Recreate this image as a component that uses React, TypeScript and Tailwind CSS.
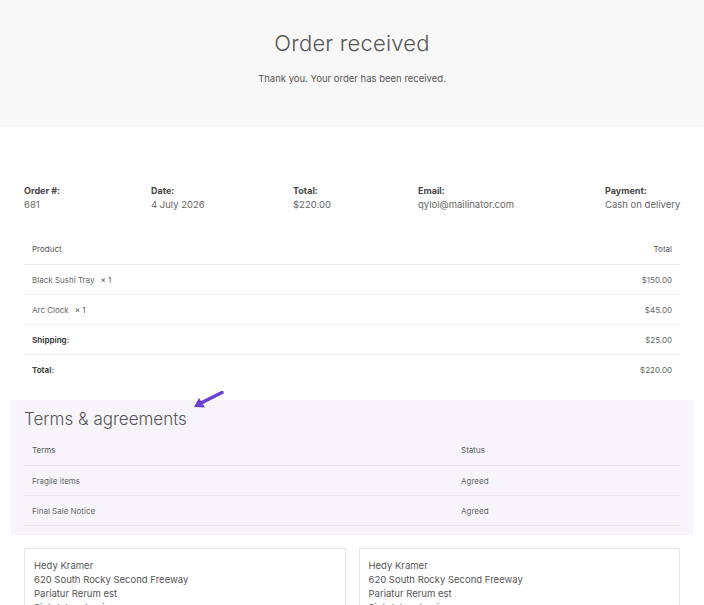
import React from "react";

const font = { fontFamily: "Inter, 'Noto Sans', sans-serif" };

export default function App() {
  const details = [
    { label: "Order #:", value: "681", w: "w-[127px]" },
    { label: "Date:", value: "4 July 2026", w: "w-[142px]" },
    { label: "Total:", value: "$220.00", w: "w-[125px]" },
    { label: "Email:", value: "qylol@mailinator.com", w: "w-[187px]" },
    { label: "Payment:", value: "Cash on delivery", w: "" },
  ];
  const rows = [
    { name: "Black Sushi Tray", qty: true, price: "$150.00" },
    { name: "Arc Clock", qty: true, price: "$45.00" },
    { name: "Shipping:", bold: true, price: "$25.00" },
    { name: "Total:", bold: true, price: "$220.00" },
  ];
  const address = ["Hedy Kramer", "620 South Rocky Second Freeway", "Pariatur Rerum est", "Sint dolor et qui"];
  return (
    <div className="w-[704px] h-[605px] overflow-hidden bg-white text-[#555]" style={font}>
      <div className="h-[127px] bg-[#f8f8f8] flex flex-col items-center pt-[28px]">
        <h1 className="text-[22px] leading-[30px] font-light text-[#555] tracking-[0.2px]">Order received</h1>
        <p className="mt-[14px] text-[9.5px] leading-[14px] text-[#555]">Thank you. Your order has been received.</p>
      </div>

      <div className="px-[24px] pt-[57px] flex">
        {details.map((d) => (
          <div key={d.label} className={`${d.w} shrink-0`}>
            <div className="text-[9px] leading-[14px] font-bold text-[#444]">{d.label}</div>
            <div className="text-[9.5px] leading-[14px] text-[#666]">{d.value}</div>
          </div>
        ))}
      </div>

      <div className="mx-[24px] mt-[21px]">
        <div className="h-[32px] flex items-center justify-between px-[8px] border-b border-[#ececec] text-[8px] text-[#555]">
          <span>Product</span>
          <span>Total</span>
        </div>
        {rows.map((r, i) => (
          <div
            key={r.name}
            className={`h-[30px] flex items-center justify-between px-[8px] text-[8px] text-[#666] ${i < 3 ? "border-b border-[#f0f0f0]" : ""}`}
          >
            <span className={r.bold ? "font-bold text-[#444]" : ""}>
              {r.name}
              {r.qty && <span className="ml-[6px] text-[#555]">× 1</span>}
            </span>
            <span>{r.price}</span>
          </div>
        ))}
      </div>

      <div className="relative mx-[11px] mt-[15px] h-[135px] bg-[#f7f5fb] px-[13px] pt-[7px]">
        <svg className="absolute left-[181px] top-[-10px]" width="34" height="20" viewBox="0 0 34 20">
          <line x1="30" y1="2.5" x2="8" y2="13.5" stroke="#6b3fd1" strokeWidth="3.5" strokeLinecap="round" />
          <polygon points="2,17 13,17.5 7,8" fill="#6b3fd1" />
        </svg>
        <h2 className="text-[17px] leading-[24px] font-light text-[#555]">Terms &amp; agreements</h2>
        <div className="mt-[3px]">
          <div className="h-[32px] flex items-center px-[8px] border-b border-[#e4e2ea] text-[8px] text-[#555]">
            <span className="w-[429px]">Terms</span>
            <span>Status</span>
          </div>
          {["Fragile items", "Final Sale Notice"].map((t) => (
            <div key={t} className="h-[30px] flex items-center px-[8px] border-b border-[#e8e6ee] text-[8px] text-[#666]">
              <span className="w-[429px]">{t}</span>
              <span>Agreed</span>
            </div>
          ))}
        </div>
      </div>

      <div className="mx-[24px] mt-[13px] flex gap-[13px]">
        {[0, 1].map((k) => (
          <div key={k} className="flex-1 h-[80px] border border-[#e6e6e6] px-[9px] pt-[10px]">
            {address.map((a) => (
              <div key={a} className="text-[9.5px] leading-[14px] text-[#555]">{a}</div>
            ))}
          </div>
        ))}
      </div>
    </div>
  );
}
